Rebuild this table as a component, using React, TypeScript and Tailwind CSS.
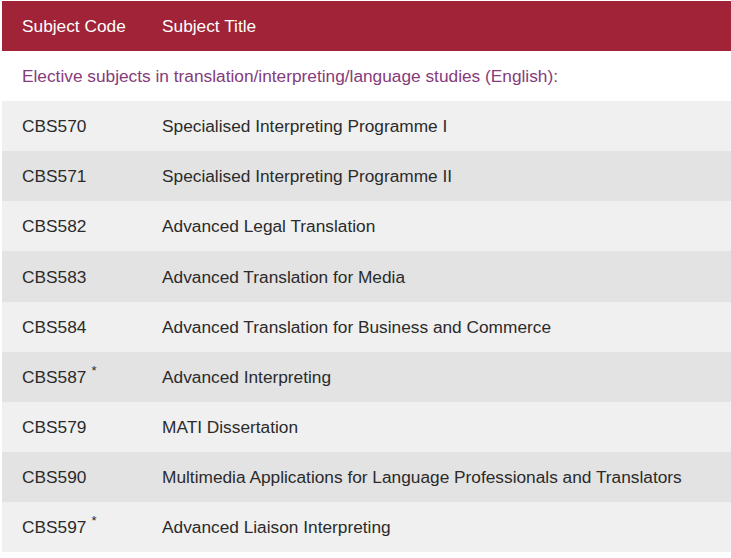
import React from 'react';

const subjects: { code: string; title: string; star?: boolean }[] = [
  { code: 'CBS570', title: 'Specialised Interpreting Programme I' },
  { code: 'CBS571', title: 'Specialised Interpreting Programme II' },
  { code: 'CBS582', title: 'Advanced Legal Translation' },
  { code: 'CBS583', title: 'Advanced Translation for Media' },
  { code: 'CBS584', title: 'Advanced Translation for Business and Commerce' },
  { code: 'CBS587', title: 'Advanced Interpreting', star: true },
  { code: 'CBS579', title: 'MATI Dissertation' },
  { code: 'CBS590', title: 'Multimedia Applications for Language Professionals and Translators' },
  { code: 'CBS597', title: 'Advanced Liaison Interpreting', star: true },
];

export default function App() {
  return (
    <div
      className="w-[731px] h-[558px] bg-white pt-px pl-[2px] text-[17.3px] text-[#2b2b2b]"
      style={{ fontFamily: "'Liberation Sans', Arial, sans-serif" }}
    >
      {/* header */}
      <div className="flex h-[50px] items-center pt-px bg-[#a02337] text-white">
        <div className="w-[140px] pl-5">Subject Code</div>
        <div className="pl-5">Subject Title</div>
      </div>

      {/* section caption */}
      <div className="flex h-[50px] items-center pt-px pl-5 text-[#853b7c]">
        Elective subjects in translation/interpreting/language studies (English):
      </div>

      {subjects.map((s, i) => (
        <div
          key={s.code}
          className={`flex h-[50.15px] items-center pt-[2px] ${i % 2 === 0 ? 'bg-[#f0f0f0]' : 'bg-[#e3e3e3]'}`}
        >
          <div className="w-[140px] pl-5">
            {s.code}
            {s.star && <span className="relative -top-[8px] ml-[5px] text-[13px]">*</span>}
          </div>
          <div className="pl-5">{s.title}</div>
        </div>
      ))}
    </div>
  );
}
